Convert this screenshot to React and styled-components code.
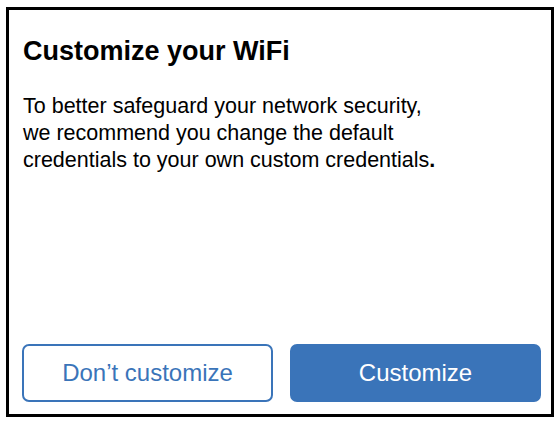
import React from "react";
import styled, { createGlobalStyle } from "styled-components";

const GlobalStyle = createGlobalStyle`
  * {
    box-sizing: border-box;
  }
  body {
    margin: 0;
    background: #ffffff;
    font-family: "Liberation Sans", Arial, Helvetica, sans-serif;
  }
`;

const Frame = styled.div`
  margin: 7px 0 0 6px;
  width: 548px;
  height: 410px;
  border: 3px solid #000000;
  background: #ffffff;
  display: flex;
  flex-direction: column;
  padding: 26px 10px 12px 13px;
`;

const Title = styled.h1`
  margin: 0 0 0 1px;
  font-size: 27px;
  font-weight: 700;
  line-height: 30px;
  color: #000000;
`;

const Message = styled.p`
  margin: 27px 0 0 1px;
  font-size: 21.5px;
  line-height: 27px;
  color: #000000;
`;

const Strong = styled.b`
  font-weight: 700;
`;

const Actions = styled.div`
  margin-top: auto;
  display: flex;
  gap: 17px;
`;

const Button = styled.button`
  flex: 1;
  height: 58px;
  border-radius: 7px;
  border: 2px solid #3a74b9;
  background: ${(p) => (p.$primary ? "#3a74b9" : "#ffffff")};
  color: ${(p) => (p.$primary ? "#ffffff" : "#3a74b9")};
  font-family: inherit;
  font-size: 24px;
  cursor: pointer;
`;

export default function App() {
  return (
    <>
      <GlobalStyle />
      <Frame>
        <Title>Customize your WiFi</Title>
        <Message>
          To better safeguard your network security,
          <br />
          we recommend you change the default
          <br />
          credentials to your own custom credentials<Strong>.</Strong>
        </Message>
        <Actions>
          <Button>Don’t customize</Button>
          <Button $primary>Customize</Button>
        </Actions>
      </Frame>
    </>
  );
}
